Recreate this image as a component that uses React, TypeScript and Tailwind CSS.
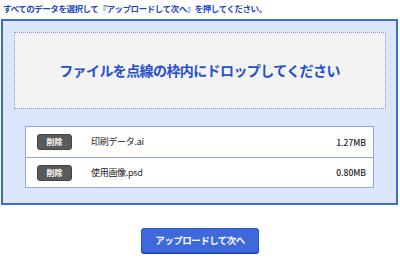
const files = [
  { name: "印刷データ.ai", size: "1.27MB" },
  { name: "使用画像.psd", size: "0.80MB" },
];

export default function App() {
  return (
    <div
      className="w-[400px] h-[278px] bg-white"
      style={{ fontFamily: '"Noto Sans CJK JP", "Noto Sans", sans-serif' }}
    >
      <p className="h-[19px] pl-[3px] pt-[2px] text-[8.5px] leading-[12px] font-bold tracking-[-0.45px] text-[#1d47c0]">
        すべてのデータを選択して『アップロードして次へ』を押してください。
      </p>

      <div className="ml-[1px] w-[397px] h-[186px] border-2 border-[#3a6bdc] bg-[#dce7fd] pt-[11px]">
        <div className="mx-auto w-[372px] h-[77px] border border-dotted border-[#7f95e0] bg-[#f3f3f3] flex items-center justify-center">
          <span className="text-[14px] font-bold tracking-[-0.6px] text-[#2550c9]">
            ファイルを点線の枠内にドロップしてください
          </span>
        </div>

        <ul className="mx-auto mt-[17px] w-[349px] border border-[#8ba6ea] bg-white">
          {files.map((f, i) => (
            <li
              key={f.name}
              className={
                "h-[30px] flex items-center pl-[11px] pr-[7px] " +
                (i > 0 ? "border-t border-[#8ba6ea]" : "")
              }
            >
              <button className="w-[35px] h-[16px] rounded-[3px] bg-[#5a5a5a] border border-[#444] text-[8px] leading-none font-bold text-white">
                削除
              </button>
              <span className="ml-[19px] text-[9px] tracking-[-0.3px] text-[#222]">{f.name}</span>
              <span className="ml-auto text-[8.5px] font-medium text-[#222]">{f.size}</span>
            </li>
          ))}
        </ul>
      </div>

      <div className="flex justify-center pt-[23px]">
        <button className="w-[118px] h-[25px] rounded-[3px] bg-[#3d69dd] border border-[#2a55cc] text-white text-[9.5px] font-bold tracking-[-0.5px] shadow-[0_1px_0_#1e43b0]">
          アップロードして次へ
        </button>
      </div>
    </div>
  );
}
